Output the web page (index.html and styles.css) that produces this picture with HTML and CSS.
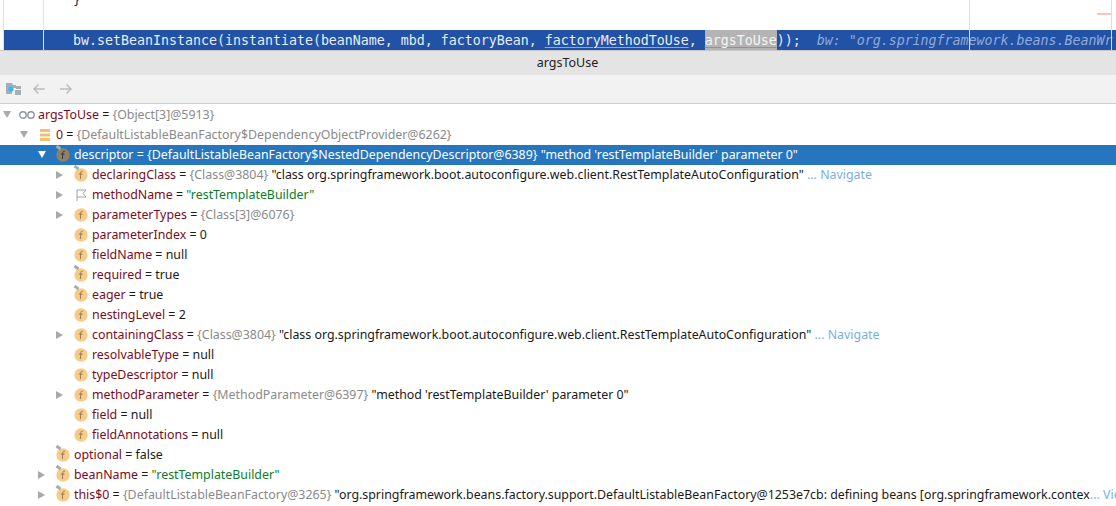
FILE: index.html
```html
<!DOCTYPE html>
<html lang="en">
<head>
<meta charset="utf-8">
<title>argsToUse</title>
<link rel="stylesheet" href="styles.css">
</head>
<body>
<svg class="defs" width="0" height="0" aria-hidden="true">
  <defs>
    <symbol id="f" viewBox="0 0 14 14">
      <circle cx="7" cy="7" r="6.7" fill="#f9cb86"/>
      <path d="M9 3.300C7.700 2.800 6.900 3.400 6.800 4.700L6.400 11M4.800 6.100H8.600" fill="none" stroke="#84765e" stroke-width="0.900"/>
    </symbol>
    <symbol id="fsel" viewBox="0 0 14 14">
      <circle cx="7" cy="7" r="6.7" fill="#8f8163"/>
      <path d="M9 3.300C7.700 2.800 6.900 3.400 6.800 4.700L6.400 11M4.800 6.100H8.600" fill="none" stroke="#2f2f2f" stroke-width="0.900"/>
    </symbol>
  </defs>
</svg>

<section class="editor">
  <div class="code-line brace">}</div>
  <div class="code-line spacer"></div>
  <div class="code-line current">bw.setBeanInstance(instantiate(beanName, mbd, factoryBean, <span class="under">factoryMethodToUse</span>, <span class="hit">argsToUse</span>));<span class="hint">bw: "org.springframework.beans.BeanWr</span></div>
  <i class="rule r1"></i><i class="rule r2"></i><i class="rule r3"></i><i class="rule r4"></i><i class="stripe"></i>
</section>

<header class="title">argsToUse</header>

<nav class="toolbar">
  <svg class="tool" width="16" height="16" viewBox="0 0 16 16"><path d="M0 2h6l1 2h3v3H6v6H0z" fill="#9fb0bd"/><rect x="9" y="9" width="6" height="5" fill="#a8adb2"/><rect x="10" y="5" width="5" height="3" fill="#a8adb2"/><circle cx="5" cy="8" r="2.600" fill="#3fb3ea"/></svg>
  <svg class="tool" width="14" height="12" viewBox="0 0 14 12"><path d="M13 6H2M6.500 1.500 2 6l4.500 4.500" fill="none" stroke="#b9bdc1" stroke-width="1.500"/></svg>
  <svg class="tool" width="14" height="12" viewBox="0 0 14 12"><path d="M1 6h11M7.500 1.500 12 6l-4.500 4.500" fill="none" stroke="#b9bdc1" stroke-width="1.500"/></svg>
</nav>

<main class="tree">
  <div class="row d0"><b class="arrow open"></b><svg class="ico wide" viewBox="0 0 16 10"><circle cx="4" cy="5" r="3.200" fill="none" stroke="#8c96a0" stroke-width="1.400"/><circle cx="12" cy="5" r="3.200" fill="none" stroke="#8c96a0" stroke-width="1.400"/></svg><span class="k">argsToUse</span> = <span class="t">{Object[3]@5913}</span></div>
  <div class="row d1"><b class="arrow open"></b><svg class="ico" viewBox="0 0 14 14"><path d="M2 1h10v3H2zM2 5.500h10v3H2zM2 10h10v3H2z" fill="#f2bf6e"/></svg><span class="k">0</span> = <span class="t">{DefaultListableBeanFactory$DependencyObjectProvider@6262}</span></div>
  <div class="row d2 selected"><b class="arrow open"></b><span class="ico pin"><svg viewBox="0 0 14 14"><use href="#fsel"/></svg></span><span class="k">descriptor</span> = <span class="t">{DefaultListableBeanFactory$NestedDependencyDescriptor@6389}</span> "method 'restTemplateBuilder' parameter 0"</div>
  <div class="row d3"><b class="arrow"></b><span class="ico pin"><svg viewBox="0 0 14 14"><use href="#f"/></svg></span><span class="k">declaringClass</span> = <span class="t">{Class@3804}</span> "class org.springframework.boot.autoconfigure.web.client.RestTemplateAutoConfiguration"<span class="nav"> ... Navigate</span></div>
  <div class="row d3"><b class="arrow"></b><svg class="ico" viewBox="0 0 14 14"><path d="M3 13V2h9L9 5.500 12 9H3" fill="none" stroke="#9aa3ab"/></svg><span class="k">methodName</span> = <span class="s">"restTemplateBuilder"</span></div>
  <div class="row d3"><b class="arrow"></b><svg class="ico" viewBox="0 0 14 14"><use href="#f"/></svg><span class="k">parameterTypes</span> = <span class="t">{Class[3]@6076}</span></div>
  <div class="row d3"><b class="arrow none"></b><svg class="ico" viewBox="0 0 14 14"><use href="#f"/></svg><span class="k">parameterIndex</span> = 0</div>
  <div class="row d3"><b class="arrow none"></b><svg class="ico" viewBox="0 0 14 14"><use href="#f"/></svg><span class="k">fieldName</span> = null</div>
  <div class="row d3"><b class="arrow none"></b><span class="ico pin"><svg viewBox="0 0 14 14"><use href="#f"/></svg></span><span class="k">required</span> = true</div>
  <div class="row d3"><b class="arrow none"></b><span class="ico pin"><svg viewBox="0 0 14 14"><use href="#f"/></svg></span><span class="k">eager</span> = true</div>
  <div class="row d3"><b class="arrow none"></b><svg class="ico" viewBox="0 0 14 14"><use href="#f"/></svg><span class="k">nestingLevel</span> = 2</div>
  <div class="row d3"><b class="arrow"></b><svg class="ico" viewBox="0 0 14 14"><use href="#f"/></svg><span class="k">containingClass</span> = <span class="t">{Class@3804}</span> "class org.springframework.boot.autoconfigure.web.client.RestTemplateAutoConfiguration"<span class="nav"> ... Navigate</span></div>
  <div class="row d3"><b class="arrow none"></b><svg class="ico" viewBox="0 0 14 14"><use href="#f"/></svg><span class="k">resolvableType</span> = null</div>
  <div class="row d3"><b class="arrow none"></b><svg class="ico" viewBox="0 0 14 14"><use href="#f"/></svg><span class="k">typeDescriptor</span> = null</div>
  <div class="row d3"><b class="arrow"></b><svg class="ico" viewBox="0 0 14 14"><use href="#f"/></svg><span class="k">methodParameter</span> = <span class="t">{MethodParameter@6397}</span> "method 'restTemplateBuilder' parameter 0"</div>
  <div class="row d3"><b class="arrow none"></b><svg class="ico" viewBox="0 0 14 14"><use href="#f"/></svg><span class="k">field</span> = null</div>
  <div class="row d3"><b class="arrow none"></b><svg class="ico" viewBox="0 0 14 14"><use href="#f"/></svg><span class="k">fieldAnnotations</span> = null</div>
  <div class="row d2"><b class="arrow none"></b><span class="ico pin"><svg viewBox="0 0 14 14"><use href="#f"/></svg></span><span class="k">optional</span> = false</div>
  <div class="row d2"><b class="arrow"></b><span class="ico pin"><svg viewBox="0 0 14 14"><use href="#f"/></svg></span><span class="k">beanName</span> = <span class="s">"restTemplateBuilder"</span></div>
  <div class="row d2"><b class="arrow"></b><span class="ico pin"><svg viewBox="0 0 14 14"><use href="#f"/></svg></span><span class="k">this$0</span> = <span class="t">{DefaultListableBeanFactory@3265}</span> "org.springframework.beans.factory.support.DefaultListableBeanFactory@1253e7cb: defining beans [org.springframework.contex<span class="nav">... View</span></div>
</main>
</body>
</html>
```
FILE: styles.css
```css
* { box-sizing: border-box; }
html, body { margin: 0; height: 506px; overflow: hidden; background: #fff; }
body { font-family: "Noto Sans", "Open Sans", sans-serif; font-size: 12.38px; color: #1a1a1a; }
.defs { position: absolute; }

.editor { position: relative; height: 51px; background: #fff; overflow: hidden; border-bottom: 1px solid #c8c8c8; }
.code-line { height: 20px; padding-left: 73px; font: 13.29px/20px "DejaVu Sans Mono", monospace; white-space: pre; overflow: hidden; }
.brace { height: 10px; line-height: 0; color: #333; }
.current { background: #2152a6; color: #e6edf7; margin-left: 3px; padding-left: 70px; line-height: 22px; }
.under { text-decoration: underline; text-decoration-color: #c9a15a; text-underline-offset: 2px; }
.hit { display: inline-block; height: 20px; background: #b4b4b4; color: #f4f4f4; text-decoration: underline; text-decoration-color: #929292; text-underline-offset: 2px; }
.hint { margin-left: 16px; color: #93aad6; font-style: italic; }
.rule { position: absolute; top: 0; bottom: 0; width: 1px; background: #e0e0e0; }
.r1 { left: 3px; }
.r2 { left: 43px; background: #e4e4e4; }
.r3 { left: 969px; background: #ddd; }
.r4 { left: 1111px; background: #ddd; }
.stripe { position: absolute; left: 1097px; top: 13px; width: 14px; height: 2px; background: #fbc4c4; }

.title { height: 24px; padding-left: 19px; background: #e4e4e4; text-align: center; font-size: 12.5px; line-height: 23px; color: #222; }

.toolbar { height: 29px; background: #f2f2f2; border-bottom: 1px solid #d0d0d0; display: flex; align-items: center; padding-left: 6px; }
.tool { margin-right: 13px; }
.tool:first-child { margin-right: 10px; }

.tree { padding-top: 1px; }
.row { height: 20px; display: flex; align-items: center; white-space: pre; line-height: 20px; overflow: hidden; }
.d0 { padding-left: 3px; }
.d1 { padding-left: 20px; }
.d2 { padding-left: 38px; }
.d3 { padding-left: 56px; }
.arrow { flex: none; width: 18px; height: 10px; background: #a9a9a9; clip-path: polygon(0 1px, 7px 5px, 0 9px); }
.arrow.open { clip-path: polygon(0 1px, 8px 1px, 4px 8px); }
.d0 .arrow { width: 16px; }
.arrow.none { background: none; }
.ico { flex: none; width: 14px; height: 14px; margin-right: 4px; position: relative; display: block; }
.ico svg { display: block; width: 14px; height: 14px; }
.ico.wide { width: 16px; height: 10px; margin: 0 3px 0 0; }
.pin::before { content: ""; position: absolute; left: 0; top: -2px; width: 5px; height: 3px; background: #a3abb2; transform: rotate(35deg); z-index: 1; }
.k { color: #7a0c1e; }
.t { color: #8a8a8a; }
.s { color: #0a7d2c; }
.nav { color: #7aaee0; }
.selected { background: #2675bf; color: #fff; }
.selected .k, .selected .t { color: #fff; }
.selected .arrow { background: #fff; }
```
